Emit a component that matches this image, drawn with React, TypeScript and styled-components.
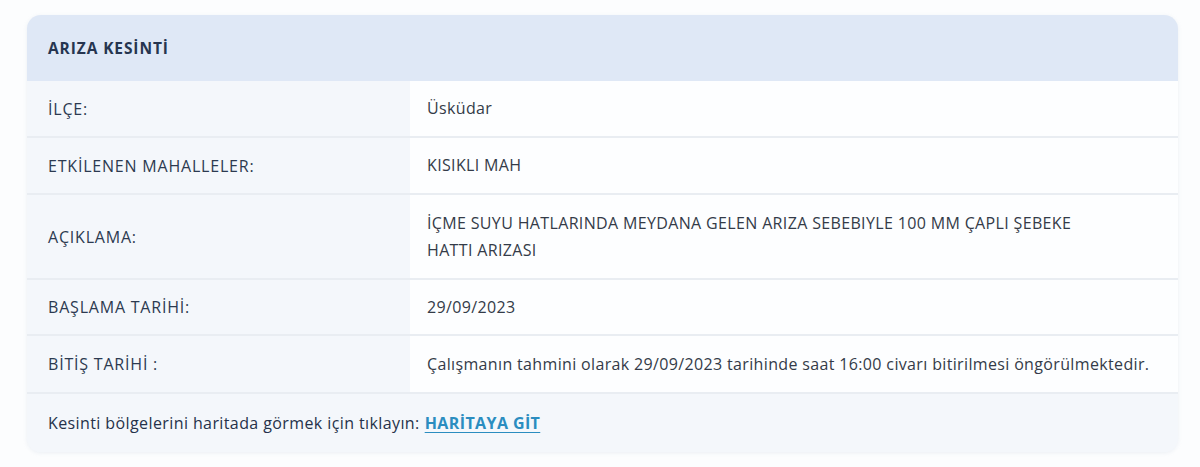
import styled, { createGlobalStyle } from "styled-components";

const GlobalStyle = createGlobalStyle`
  html, body {
    margin: 0;
    padding: 0;
    background-color: #fcfdfe;
  }
  body {
    font-family: "Open Sans", "Noto Sans", sans-serif;
  }
`;

const Page = styled.div`
  width: 1200px;
  height: 467px;
  box-sizing: border-box;
  padding: 15px 22px 16px 27px;
`;

const Card = styled.div`
  border-radius: 14px;
  overflow: hidden;
  background-color: #f4f7fb;
  box-shadow: 0 1px 4px rgba(160, 175, 200, 0.18);
`;

const CardHeader = styled.div`
  height: 66px;
  display: flex;
  align-items: center;
  padding: 0 21px;
  background-color: #dfe8f6;

  h2 {
    margin: 0;
    font-size: 15.5px;
    font-weight: 700;
    letter-spacing: 0.9px;
    color: #263550;
  }
`;

const Row = styled.div<{ $h: number }>`
  display: grid;
  grid-template-columns: 383px 1fr;
  min-height: ${(p) => p.$h}px;
  border-bottom: 2px solid #e9edf2;
`;

const Label = styled.div`
  display: flex;
  align-items: center;
  padding: 0 21px;
  font-size: 16px;
  font-weight: 500;
  letter-spacing: 0.8px;
  color: #2c3a50;
  background-color: #f4f7fb;
`;

const Value = styled.div<{ $max: number }>`
  display: flex;
  align-items: center;
  padding: 0 17px;
  font-size: 16px;
  letter-spacing: 0.35px;
  line-height: 27px;
  color: #343b48;
  background-color: #fdfeff;

  span {
    max-width: ${(p) => p.$max}px;
  }
`;

const Footer = styled.div`
  height: 58px;
  display: flex;
  align-items: center;
  padding: 0 21px;
  font-size: 16px;
  letter-spacing: 0.4px;
  color: #26324a;
  background-color: #f4f7fb;

  a {
    margin-left: 5px;
    font-weight: 700;
    color: #2b8dc0;
    text-decoration: underline;
    text-underline-offset: 3px;
  }
`;

const rows = [
  { label: "İLÇE:", value: "Üsküdar", h: 55, max: 740 },
  { label: "ETKİLENEN MAHALLELER:", value: "KISIKLI MAH", h: 55, max: 740 },
  {
    label: "AÇIKLAMA:",
    value:
      "İÇME SUYU HATLARINDA MEYDANA GELEN ARIZA SEBEBIYLE 100 MM ÇAPLI ŞEBEKE HATTI ARIZASI",
    h: 83,
    max: 690,
  },
  { label: "BAŞLAMA TARİHİ:", value: "29/09/2023", h: 54, max: 740 },
  {
    label: "BİTİŞ TARİHİ :",
    value:
      "Çalışmanın tahmini olarak 29/09/2023 tarihinde saat 16:00 civarı bitirilmesi öngörülmektedir.",
    h: 56,
    max: 740,
  },
];

const App = () => {
  return (
    <>
      <GlobalStyle />
      <Page>
        <Card>
          <CardHeader>
            <h2>ARIZA KESİNTİ</h2>
          </CardHeader>
          {rows.map((r) => (
            <Row key={r.label} $h={r.h}>
              <Label>{r.label}</Label>
              <Value $max={r.max}>
                <span>{r.value}</span>
              </Value>
            </Row>
          ))}
          <Footer>
            Kesinti bölgelerini haritada görmek için tıklayın:
            <a href="#">HARİTAYA GİT</a>
          </Footer>
        </Card>
      </Page>
    </>
  );
};

export default App;
